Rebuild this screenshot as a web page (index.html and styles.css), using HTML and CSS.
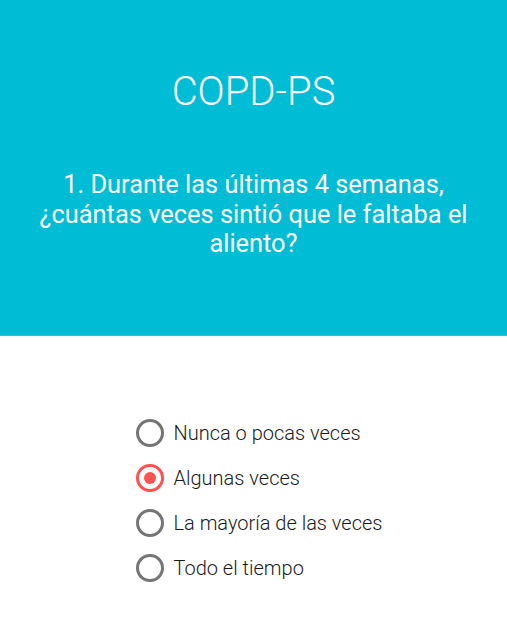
FILE: index.html
```html
<!DOCTYPE html>
<html lang="es">
<head>
<meta charset="utf-8">
<link rel="stylesheet" href="styles.css">
</head>
<body>
<header class="header">
  <h1 class="title">COPD-PS</h1>
  <p class="question">1. Durante las últimas 4 semanas, ¿cuántas veces sintió que le faltaba el aliento?</p>
</header>
<main class="content">
  <div class="options">
    <label class="option"><span class="radio"></span><span class="label">Nunca o pocas veces</span></label>
    <label class="option"><span class="radio checked"></span><span class="label">Algunas veces</span></label>
    <label class="option"><span class="radio"></span><span class="label">La mayoría de las veces</span></label>
    <label class="option"><span class="radio"></span><span class="label">Todo el tiempo</span></label>
  </div>
</main>
</body>
</html>
```
FILE: styles.css
```css
* { box-sizing: border-box; }
html, body { margin: 0; padding: 0; }
body {
  font-family: Roboto, "Liberation Sans", sans-serif;
  background: #ffffff;
  width: 507px;
  height: 625px;
  overflow: hidden;
}
.header {
  background: #00bcd4;
  height: 336px;
  padding: 68px 28px 0;
  color: #ffffff;
  text-align: center;
  border-bottom: 1px solid #26c6da;
}
.title {
  margin: 0;
  font-weight: 300;
  font-size: 40px;
  line-height: 48px;
}
.question {
  margin: 54px 0 0;
  font-weight: 400;
  font-size: 25.4px;
  line-height: 29.5px;
}
.content {
  display: flex;
  justify-content: center;
  padding: 83px 0 0 12px;
}
.options {
  display: flex;
  flex-direction: column;
  gap: 17px;
}
.option {
  display: flex;
  align-items: center;
  gap: 9px;
  height: 28px;
}
.radio {
  width: 28px;
  height: 28px;
  border: 3px solid #757575;
  border-radius: 50%;
  display: flex;
  align-items: center;
  justify-content: center;
  flex: none;
}
.radio.checked { border-color: #ff5252; }
.radio.checked::after {
  content: "";
  width: 12px;
  height: 12px;
  border-radius: 50%;
  background: #ff5252;
}
.label {
  font-size: 20px;
  font-weight: 300;
  color: #1a1a1a;
}
```
